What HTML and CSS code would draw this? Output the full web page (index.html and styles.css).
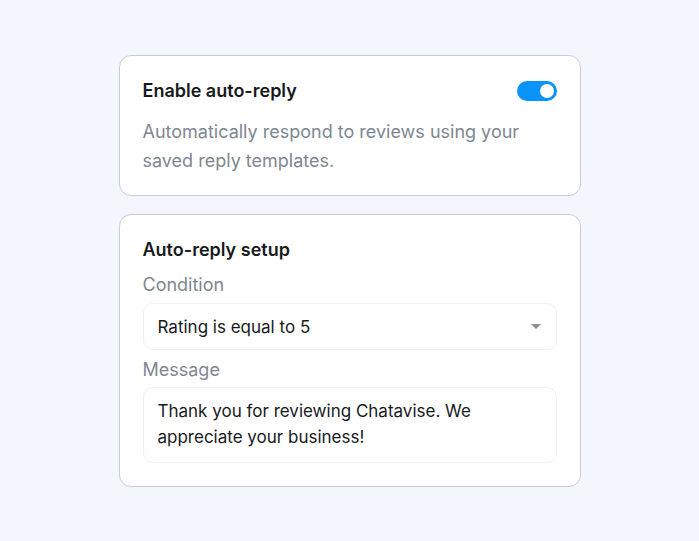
FILE: index.html
```html
<!DOCTYPE html>
<html lang="en">
<head>
  <meta charset="UTF-8">
  <meta name="viewport" content="width=device-width, initial-scale=1.0">
  <title>Auto-reply settings</title>
  <link rel="stylesheet" href="styles.css">
</head>
<body>
  <main class="settings">
    <section class="card">
      <div class="card-head">
        <h2>Enable auto-reply</h2>
        <span class="toggle on"><span class="knob"></span></span>
      </div>
      <p class="desc">Automatically respond to reviews using your saved reply templates.</p>
    </section>

    <section class="card setup">
      <h2>Auto-reply setup</h2>
      <label class="field-label">Condition</label>
      <div class="select">
        <span>Rating is equal to 5</span>
        <span class="caret"></span>
      </div>
      <label class="field-label msg-label">Message</label>
      <div class="textarea">Thank you for reviewing Chatavise. We appreciate your business!</div>
    </section>
  </main>
</body>
</html>
```

FILE: styles.css
```css
body {
  margin: 0;
  background-color: #f3f6fd;
  font-family: Inter, "Noto Sans", sans-serif;
  color: #17191c;
}
.settings {
  width: 462px;
  margin: 55px auto 0;
  display: flex;
  flex-direction: column;
  gap: 18px;
}
.card {
  background: #fff;
  border: 1px solid #c9ccd3;
  border-radius: 12px;
  padding: 24px 23px 20px;
}
h2 {
  margin: 0;
  font-size: 18px;
  font-weight: 600;
  line-height: 22px;
}
.card-head {
  display: flex;
  align-items: center;
  justify-content: space-between;
}
.toggle {
  width: 40px;
  height: 20px;
  border-radius: 10px;
  background: #0a93fb;
  position: relative;
}
.toggle .knob {
  position: absolute;
  top: 3px;
  right: 3px;
  width: 14px;
  height: 14px;
  border-radius: 50%;
  background: #fff;
}
.desc {
  margin: 15px 0 0;
  font-size: 18px;
  line-height: 29px;
  color: #7d8791;
}
.setup {
  padding-bottom: 23px;
}
.field-label {
  display: block;
  margin-top: 12px;
  font-size: 18px;
  line-height: 24px;
  color: #7d8791;
}
.msg-label {
  margin-top: 8px;
}
.select {
  margin-top: 6px;
  height: 47px;
  border: 1px solid #f0f1f3;
  border-radius: 10px;
  padding: 0 14px;
  display: flex;
  align-items: center;
  justify-content: space-between;
  font-size: 17px;
  box-sizing: border-box;
}
.caret {
  width: 0;
  height: 0;
  border-left: 5px solid transparent;
  border-right: 5px solid transparent;
  border-top: 5px solid #8a8d91;
  margin-right: 1px;
}
.textarea {
  margin-top: 5px;
  border: 1px solid #f0f1f3;
  border-radius: 10px;
  padding: 10px 14px 12px;
  font-size: 17px;
  line-height: 26px;
}
```
